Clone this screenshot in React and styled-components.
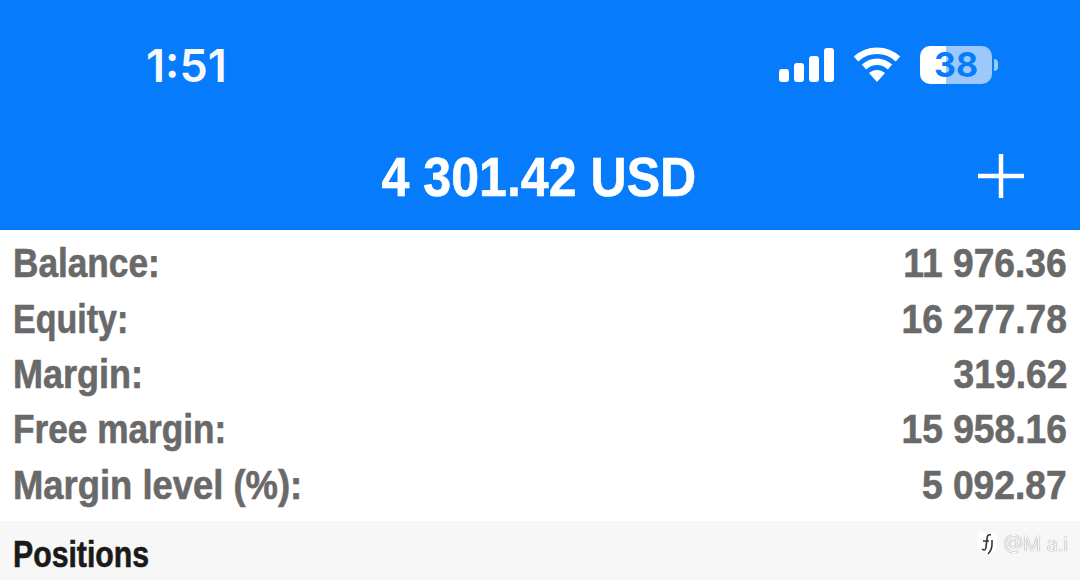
import React from "react";
import styled, { createGlobalStyle } from "styled-components";

const GlobalStyle = createGlobalStyle`
  html, body {
    margin: 0;
    padding: 0;
    background: #f7f7f7;
  }
`

const Screen = styled.div`
  position: relative;
  width: 1080px;
  height: 580px;
  overflow: hidden;
  display: flex;
  flex-direction: column;
  font-family: "Liberation Sans", Arial, sans-serif;
`

const BlueHeader = styled.div`
  height: 230px;
  flex: none;
  background: #067bfb;
  color: #fff;
  display: flex;
  flex-direction: column;
`

const StatusBar = styled.div`
  height: 130px;
  box-sizing: border-box;
  padding: 0 82px 0 146px;
  display: flex;
  align-items: center;
  justify-content: space-between;
`

const Clock = styled.div`
  font-family: "Inter", "Liberation Sans", sans-serif;
  font-size: 45px;
  font-weight: 600;
  opacity: 0.96;
`

const StatusIcons = styled.div`
  display: flex;
  align-items: center;
  gap: 19px;
`

const Battery = styled.div`
  width: 72px;
  height: 38px;
  margin-right: 6px;
  position: relative;
  border-radius: 10px;
  background: linear-gradient(to right, #fff 26px, #9cc8fb 26px);
  color: #067bfb;
  font-family: "Inter", sans-serif;
  font-size: 34px;
  font-weight: 700;
  line-height: 38px;
  text-align: center;

  &::after {
    content: "";
    position: absolute;
    left: 74px;
    top: 13px;
    width: 4px;
    height: 12px;
    border-radius: 0 6px 6px 0;
    background: #9cc8fb;
  }
`

const BalanceBar = styled.div`
  flex: 1;
  position: relative;
  display: flex;
  align-items: center;
  justify-content: center;
  padding-bottom: 8px;
  padding-right: 3px;
`

const Squeeze = styled.span`
  display: inline-block;
  font-weight: 700;
  white-space: nowrap;
  -webkit-text-stroke: 0.6px currentColor;
  transform: scaleX(${(props) => props.$x || 0.885});
  transform-origin: ${(props) => props.$origin || "left"} center;
`

const Total = styled(Squeeze)`
  font-size: 56px;
`

const PlusButton = styled.svg`
  position: absolute;
  right: 55px;
  top: 23px;
`

const Summary = styled.div`
  background: #fff;
  height: 291px;
  flex: none;
  box-sizing: border-box;
  padding: 6px 13px 0;
`

const Row = styled.div`
  height: 55.4px;
  display: flex;
  align-items: center;
  justify-content: space-between;
  color: #696969;
  font-size: 40px;
`

const SectionBar = styled.div`
  flex: 1;
  background: #f7f7f7;
  padding: 11px 13px 0;
  color: #1a1a1a;
  font-size: 36px;
  line-height: 46px;
`

const Watermark = styled.div`
  position: absolute;
  right: 12px;
  bottom: 23px;
  display: flex;
  align-items: center;
  gap: 6px;
  color: #fff;
  font-family: "Inter", sans-serif;
  font-size: 20px;
  font-weight: 300;
  text-shadow: 0 0 1px #555;
`

const rows = [
  { label: "Balance:", value: "11 976.36", x: 0.88 },
  { label: "Equity:", value: "16 277.78", x: 0.85 },
  { label: "Margin:", value: "319.62", x: 0.9 },
  { label: "Free margin:", value: "15 958.16", x: 0.88 },
  { label: "Margin level (%):", value: "5 092.87", x: 0.91 },
];

const Signal = () => (
  <svg width="55" height="34" viewBox="0 0 55 34">
    <rect x="0" y="21" width="10" height="13" rx="3" fill="#fff" />
    <rect x="15" y="15" width="10" height="19" rx="3" fill="#fff" />
    <rect x="30" y="8" width="10" height="26" rx="3" fill="#fff" />
    <rect x="45" y="0" width="10" height="34" rx="3" fill="#fff" />
  </svg>
);

const Wifi = () => (
  <svg width="48" height="36" viewBox="0 0 48 36" fill="none" stroke="#fff" strokeWidth="6.5">
    <path d="M3 12C15 1 33 1 45 12" />
    <path d="M11 20C19 13 29 13 37 20" />
    <path d="M16 26L24 35L32 26C27 22 21 22 16 26Z" fill="#fff" stroke="none" />
  </svg>
);

export default function App() {
  return (
    <Screen>
      <GlobalStyle />
      <BlueHeader>
        <StatusBar>
          <Clock>1:51</Clock>
          <StatusIcons>
            <Signal />
            <Wifi />
            <Battery>38</Battery>
          </StatusIcons>
        </StatusBar>
        <BalanceBar>
          <Total $origin="center" $x={0.895}>4 301.42 USD</Total>
          <PlusButton width="48" height="48" viewBox="0 0 48 48" stroke="#fff" strokeWidth="4.5">
            <path d="M24 1V45M1 23H47" />
          </PlusButton>
        </BalanceBar>
      </BlueHeader>
      <Summary>
        {rows.map((row) => (
          <Row key={row.label}>
            <Squeeze $x={row.x}>{row.label}</Squeeze>
            <Squeeze $origin="right" $x={0.93}>{row.value}</Squeeze>
          </Row>
        ))}
      </Summary>
      <SectionBar>
        <Squeeze $x={0.84}>Positions</Squeeze>
      </SectionBar>
      <Watermark>
        <svg width="22" height="26" viewBox="0 0 22 26">
          <path d="M7 1H15C19 1 21 3 21 7V14C21 19 18 22 12 25C9 21 6 21 4 20C2 19 1 17 1 13V7C1 3 3 1 7 1Z" fill="#fff" />
          <path d="M15 4C12 3 11 5 11 8L10 16C10 19 8 20 6 18M7 10H13M16 9V13C16 17 15 20 12 23" fill="none" stroke="#333" strokeWidth="1.6" />
        </svg>
        <span>@M a.i</span>
      </Watermark>
    </Screen>
  );
}
